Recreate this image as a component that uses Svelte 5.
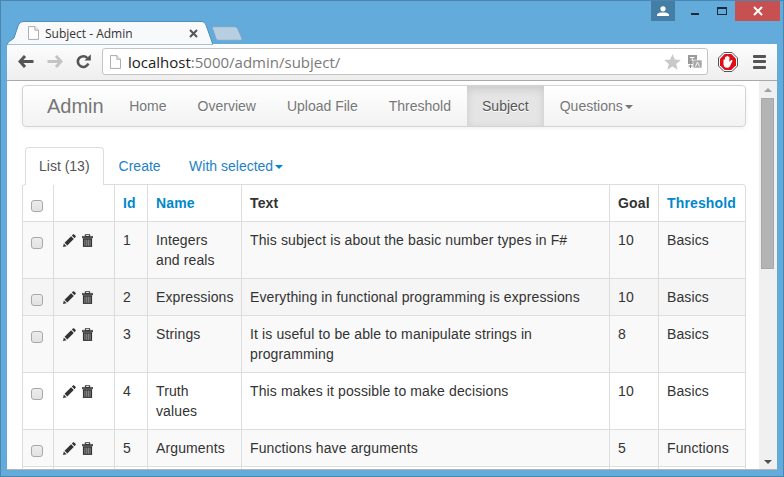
<script>
  const rows = [
    { id: 1, name: ['Integers', 'and reals'], text: 'This subject is about the basic number types in F#', goal: 10, th: 'Basics', cls: 'odd' },
    { id: 2, name: ['Expressions'], text: 'Everything in functional programming is expressions', goal: 10, th: 'Basics', cls: 'hover' },
    { id: 3, name: ['Strings'], text: 'It is useful to be able to manipulate strings in programming', goal: 8, th: 'Basics', cls: 'odd' },
    { id: 4, name: ['Truth', 'values'], text: 'This makes it possible to make decisions', goal: 10, th: 'Basics', cls: '' },
    { id: 5, name: ['Arguments'], text: 'Functions have arguments', goal: 5, th: 'Functions', cls: 'odd' }
  ];
  const navs = ['Home', 'Overview', 'Upload File', 'Threshold'];
</script>

<div class="window">
  <div class="titlebar">
    <div class="tabs">
      <div class="tab">
        <svg class="tabshape" width="206" height="24" viewBox="0 0 206 24">
          <path d="M0 24 C1 20 4 20 7 17 L11 5 C12 2 14 .5 17 .5 H194 C197 .5 198 2 199 4 L205 21 C205.500 23 206 24 206 24 Z" fill="#f8f9fa" stroke="#4f8fbb" stroke-width="1" />
        </svg>
        <svg class="page-ic" width="11" height="14" viewBox="0 0 12 15"><path d="M.5.5H7.500L11.500 4.500V14.500H.5Z" fill="#fff" stroke="#a3a3a3" /><path d="M7.500.5V4.500H11.500" fill="#eee" stroke="#a3a3a3" /></svg>
        <span class="tabtitle">Subject - Admin</span>
        <svg class="tabx" width="9" height="9" viewBox="0 0 9 9"><path d="M1 1L8 8M8 1L1 8" stroke="#555" stroke-width="2" /></svg>
      </div>
      <svg class="newtab" width="31" height="15" viewBox="0 0 32 15"><path d="M1 .5H23C25 .5 26 1.500 27 3.500L31 13C31.500 14 30.500 14.500 29 14.500H7C5 14.500 4.500 13.500 4 12.500L.5 2C.2 1 .5 .5 1 .5Z" fill="#b7cfe1" stroke="#7ba6c6" /></svg>
    </div>
    <div class="winbtns">
      <div class="user"><svg width="12" height="10" viewBox="0 0 12 10"><circle cx="6" cy="2.800" r="2.600" fill="#fff" /><path d="M0 10V8.500C1 6.800 3.500 6.500 6 6.500S11 6.800 12 8.500V10Z" fill="#fff" /></svg></div>
      <div class="wbtn min"><span></span></div>
      <div class="wbtn max"><span></span></div>
      <div class="close"><svg width="10" height="10" viewBox="0 0 10 10"><path d="M1 1L9 9M9 1L1 9" stroke="#fff" stroke-width="2" /></svg></div>
    </div>
  </div>

  <div class="chrome">
    <div class="toolbar">
      <svg class="tb back" width="16" height="13" viewBox="0 0 16 13"><path d="M7 1L2 6.500L7 12M2.500 6.500H15.500" fill="none" stroke="#555" stroke-width="3" /></svg>
      <svg class="tb fwd" width="16" height="13" viewBox="0 0 16 13"><path d="M9 1L14 6.500L9 12M13.500 6.500H.5" fill="none" stroke="#c4c4c4" stroke-width="3" /></svg>
      <svg class="tb reload" width="15" height="15" viewBox="0 0 15 15"><path d="M12.300 9.500A5.400 5.400 0 1 1 11.300 4" fill="none" stroke="#555" stroke-width="2.600" /><path d="M8.500 6.500H14.800V.3Z" fill="#555" /></svg>
      <div class="omni">
        <svg class="page-ic small" width="11" height="14" viewBox="0 0 12 15"><path d="M.5.5H7.500L11.500 4.500V14.500H.5Z" fill="#fff" stroke="#a3a3a3" /><path d="M7.500.5V4.500H11.500" fill="#eee" stroke="#a3a3a3" /></svg>
        <span class="url"><span class="host">localhost</span>:5000/admin/subject/</span>
        <svg class="star" width="17" height="16" viewBox="0 0 17 16"><path d="M8.500 0L10.800 5.500L16.800 6L12.200 9.900L13.700 15.800L8.500 12.600L3.300 15.800L4.800 9.900L.2 6L6.200 5.500Z" fill="#c9c9c9" /></svg>
        <svg class="trans" width="14" height="14" viewBox="0 0 14 14"><rect x="0" y="0" width="9" height="9" fill="#9a9a9a" /><rect x="5" y="5" width="9" height="8" fill="#a8a8a8" stroke="#fff" stroke-width=".6" /><path d="M2 2.500H6.500M4.200 2.500V6" stroke="#fff" stroke-width="1" /><path d="M7.500 11.500L9.500 7L11.500 11.500" stroke="#fff" fill="none" stroke-width=".9" /><path d="M.5 11H4.500M2.500 9.500V13" stroke="#888" stroke-width="1" /></svg>
      </div>
      <svg class="stop" width="20" height="20" viewBox="0 0 20 20">
        <path d="M6 .5H14L19.500 6V14L14 19.500H6L.5 14V6Z" fill="#fff" stroke="#555" />
        <path d="M6.700 2H13.300L18 6.700V13.300L13.300 18H6.700L2 13.300V6.700Z" fill="#e00d17" />
        <path d="M5.500 8C5.500 7 7 7 7 8V5.500C7 4.600 8.400 4.600 8.400 5.500V4.500C8.400 3.600 9.900 3.600 9.900 4.500V5C9.900 4.200 11.400 4.200 11.400 5V10L12.900 8.300C13.600 7.600 14.800 8.300 14.300 9.200L12.300 13.500C11.700 15 10.700 15.800 9 15.800C6.700 15.800 5.500 14.300 5.500 12Z" fill="#fff" />
      </svg>
      <div class="menu"><span></span><span></span><span></span></div>
    </div>

    <div class="viewport">
      <div class="page">
        <nav class="navbar">
          <span class="brand">Admin</span>
          {#each navs as n}<span class="navlink">{n}</span>{/each}
          <span class="navlink active">Subject</span>
          <span class="navlink">Questions<i class="caret"></i></span>
        </nav>

        <div class="pills">
          <span class="pill current">List (13)</span>
          <span class="pill">Create</span>
          <span class="pill">With selected<i class="caret blue"></i></span>
        </div>

        <table>
          <colgroup>
            <col class="c1" /><col class="c2" /><col class="c3" /><col class="c4" /><col /><col class="c6" /><col class="c7" />
          </colgroup>
          <thead>
            <tr>
              <th><input type="checkbox" /></th>
              <th></th>
              <th class="link">Id</th>
              <th class="link">Name</th>
              <th>Text</th>
              <th>Goal</th>
              <th class="link">Threshold</th>
            </tr>
          </thead>
          <tbody>
            {#each rows as r}
              <tr class={r.cls}>
                <td><input type="checkbox" /></td>
                <td>
                  <div class="icons">
                    <svg width="13" height="13" viewBox="0 0 14 14"><path d="M0 14L.9 10.200L3.800 13.100Z" fill="#333" /><path d="M1.700 9.400L8.700 2.400L11.600 5.300L4.600 12.300Z" fill="#333" /><path d="M9.500 1.600L10.700.5C11.100.1 11.600.1 12 .5L13.500 2C13.900 2.400 13.900 2.900 13.500 3.300L12.400 4.500Z" fill="#333" /></svg>
                    <svg width="11" height="13" viewBox="0 0 12 14"><path d="M0 2.500H12V4H0ZM3.500 2.500V.5H8.500V2.500" fill="#333" stroke="#333" stroke-width=".6" /><rect x="4.500" y="1" width="3" height="1" fill="#fff" /><path d="M1 4.500H11V14H1Z" fill="#333" /><path d="M3.200 6V12.800M5.200 6V12.800M6.900 6V12.800M8.800 6V12.800" stroke="#aaa" stroke-width=".9" /></svg>
                  </div>
                </td>
                <td>{r.id}</td>
                <td>{#each r.name as part, i}{#if i}<br />{/if}{part}{/each}</td>
                <td>{r.text}</td>
                <td>{r.goal}</td>
                <td>{r.th}</td>
              </tr>
            {/each}
            <tr class="rest"><td></td><td></td><td></td><td></td><td></td><td></td><td></td></tr>
          </tbody>
        </table>
      </div>

      <div class="scrollbar">
        <i class="arrow up"></i>
        <div class="track"><div class="thumb"></div></div>
        <i class="arrow down"></i>
      </div>
    </div>
  </div>
</div>

<style>
  :global(body) { margin: 0; overflow: hidden; }
  .window {
    width: 784px; height: 477px; box-sizing: border-box;
    background: #62abdb; border: 1px solid #4a86b0;
    padding: 0 6px 6px; display: flex; flex-direction: column; overflow: hidden;
    font-family: "Liberation Sans", Arial, sans-serif; color: #333;
  }
  .titlebar { height: 43px; flex: none; display: flex; justify-content: space-between; }
  .tabs { display: flex; align-items: flex-end; }
  .tab { position: relative; width: 206px; height: 24px; display: flex; align-items: center; margin-bottom: -1px; z-index: 1; }
  .tabshape { position: absolute; left: 0; top: 0; }
  .page-ic { position: relative; margin-left: 21px; flex: none; }
  .tabtitle { position: relative; font: 12px "Open Sans", sans-serif; margin-left: 6px; color: #333; white-space: nowrap; }
  .tabx { position: relative; margin-left: auto; margin-right: 15px; flex: none; }
  .newtab { margin: 0 0 3px -1px; }
  .winbtns { display: flex; align-items: flex-start; margin-right: -3px; }
  .user { width: 24px; height: 20px; background: #457ea5; display: flex; align-items: center; justify-content: center; }
  .wbtn { height: 20px; position: relative; }
  .min { width: 33px; }
  .min span { position: absolute; left: 16px; top: 12px; width: 8px; height: 2px; background: #1a2a38; }
  .max { width: 27px; }
  .max span { position: absolute; left: 9px; top: 6px; width: 8px; height: 5px; border: 1px solid #1a2a38; border-top-width: 2px; }
  .close { width: 45px; height: 20px; background: #c75050; display: flex; align-items: center; justify-content: center; }

  .chrome { flex: 1; background: #fff; display: flex; flex-direction: column; min-height: 0; border-bottom: 1px solid #b5b5b5; }
  .toolbar {
    height: 37px; flex: none; box-sizing: border-box; display: flex; align-items: center;
    background: linear-gradient(#fdfdfd, #eeeeee); border-bottom: 1px solid #a9a9a9; padding-bottom: 1px;
  }
  .tb { flex: none; }
  .back { margin-left: 11px; }
  .fwd { margin-left: 13px; }
  .reload { margin-left: 13px; }
  .omni {
    flex: none; width: 606px; height: 27px; margin-left: 11px; box-sizing: border-box;
    background: #fff; border: 1px solid #c4c4c4; border-radius: 3px; display: flex; align-items: center;
  }
  .page-ic.small { margin-left: 7px; }
  .url { font: 15px "Open Sans", sans-serif; color: #7a7a7a; margin-left: 7px; flex: 1; white-space: nowrap; }
  .host { color: #222; }
  .star { margin-right: 7px; }
  .trans { margin-right: 5px; }
  .stop { margin-left: 10px; flex: none; }
  .menu { margin-left: 15px; display: flex; flex-direction: column; gap: 2.500px; }
  .menu span { display: block; width: 13px; height: 3px; background: #555; border-radius: 1px; }

  .viewport { flex: 1; display: flex; min-height: 0; overflow: hidden; }
  .page { flex: 1; padding: 4px 13px 0 15px; min-width: 0; font-size: 14px; line-height: 20px; }
  .navbar {
    height: 42px; box-sizing: border-box; display: flex;
    background: linear-gradient(#ffffff, #f2f2f2); border: 1px solid #d4d4d4; border-radius: 4px;
    box-shadow: 0 1px 4px rgba(0,0,0,.065);
  }
  .brand { font-size: 20px; color: #777; padding: 10px 10px 10px 24px; }
  .navlink { padding: 10px 15.500px; color: #777; text-shadow: 0 1px 0 #fff; }
  .navlink.active { background: #e5e5e5; color: #555; box-shadow: inset 0 3px 8px rgba(0,0,0,.125); }
  .caret { display: inline-block; vertical-align: middle; margin-left: 2px; margin-top: -1px; width: 0; height: 0; border-top: 4px solid #777; border-left: 4px solid transparent; border-right: 4px solid transparent; }
  .caret.blue { border-top-color: #0088cc; }
  .pills { display: flex; height: 37px; margin: 20px 0 0 3px; }
  .pill { color: #1e82c8; padding: 9px 14.500px 8px 14px; }
  .pill.current { color: #555; border: 1px solid #ddd; border-bottom: 0; border-radius: 4px 4px 0 0; background: #fff; margin: 0 1px -1px 0; position: relative; z-index: 1; padding: 8px 13px 9px; }
  table {
    width: 100%; table-layout: fixed; border-collapse: separate; border-spacing: 0;
    border: 1px solid #dddddd; border-left: 0; border-radius: 4px; font-size: 14px; line-height: 20px;
  }
  .c1 { width: 31px; } .c2 { width: 61px; } .c3 { width: 33px; } .c4 { width: 94px; }
  .c6 { width: 49px; } .c7 { width: 87px; }
  th, td { padding: 8px; text-align: left; vertical-align: top; border-left: 1px solid #ddd; border-top: 1px solid #ddd; color: #333; }
  td { letter-spacing: .12px; }
  thead th { border-top: 0; font-size: 14px; font-weight: 700; height: 20px; letter-spacing: .15px; }
  th.link { color: #0088cc; }
  tr.odd td { background: #f9f9f9; }
  tr.hover td { background: #f5f5f5; }
  tr.rest td { height: 20px; }
  input[type=checkbox] {
    appearance: none; display: block; width: 12px; height: 12px; margin: 7px 0 0; box-sizing: border-box;
    background: linear-gradient(#ececec, #e2e2e2); border: 1px solid #a8a8a8; border-radius: 3px;
  }
  .icons { display: flex; gap: 6px; margin: 4px 0 0 1px; }
  .scrollbar { width: 18px; flex: none; background: #f0f0f0; display: flex; flex-direction: column; align-items: center; }
  .track { flex: 1; width: 100%; }
  .thumb { height: 171px; margin: 0 3px 0 2px; background: #b4b4b4; border: 1px solid #a8a8a8; box-sizing: border-box; }
  .arrow { display: block; flex: none; width: 0; height: 0; border-left: 4px solid transparent; border-right: 4px solid transparent; }
  .arrow.up { border-bottom: 4px solid #a0a0a0; margin: 7px 1px 6px 0; }
  .arrow.down { border-top: 4px solid #505050; margin: 4px 1px 5px 0; }
</style>
